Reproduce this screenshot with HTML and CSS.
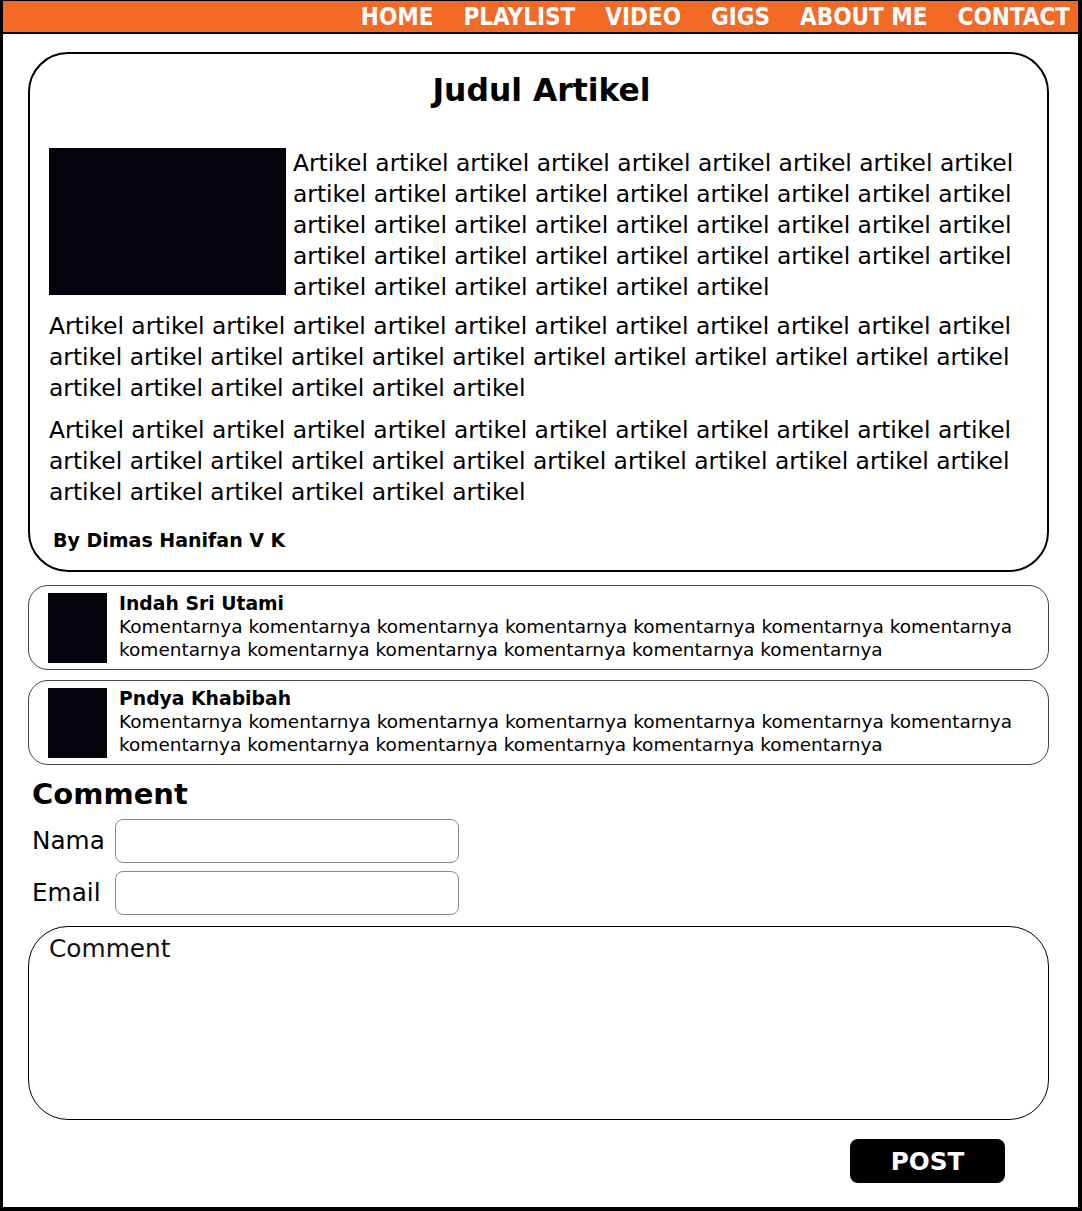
FILE: index.html
```html
<!DOCTYPE html>
<html lang="id">
<head>
<meta charset="utf-8">
<title>Judul Artikel</title>
<link rel="stylesheet" href="styles.css">
</head>
<body>
<div class="frame">
  <nav class="nav">
    <a href="#">HOME</a>
    <a href="#">PLAYLIST</a>
    <a href="#">VIDEO</a>
    <a href="#">GIGS</a>
    <a href="#">ABOUT ME</a>
    <a href="#">CONTACT</a>
  </nav>
  <main class="main">
    <article class="card">
      <h1 class="title">Judul Artikel</h1>
      <div class="body">
        <div class="thumb"></div>
        <p class="p1">Artikel artikel artikel artikel artikel artikel artikel artikel artikel artikel artikel artikel artikel artikel artikel artikel artikel artikel artikel artikel artikel artikel artikel artikel artikel artikel artikel artikel artikel artikel artikel artikel artikel artikel artikel artikel artikel artikel artikel artikel artikel artikel</p>
        <p class="p2">Artikel artikel artikel artikel artikel artikel artikel artikel artikel artikel artikel artikel artikel artikel artikel artikel artikel artikel artikel artikel artikel artikel artikel artikel artikel artikel artikel artikel artikel artikel</p>
        <p class="p3">Artikel artikel artikel artikel artikel artikel artikel artikel artikel artikel artikel artikel artikel artikel artikel artikel artikel artikel artikel artikel artikel artikel artikel artikel artikel artikel artikel artikel artikel artikel</p>
      </div>
      <div class="byline">By Dimas Hanifan V K</div>
    </article>

    <div class="comment">
      <div class="avatar"></div>
      <div class="ctext">
        <div class="cname">Indah Sri Utami</div>
        <div class="cbody">Komentarnya komentarnya komentarnya komentarnya komentarnya komentarnya komentarnya komentarnya komentarnya komentarnya komentarnya komentarnya komentarnya</div>
      </div>
    </div>
    <div class="comment second">
      <div class="avatar"></div>
      <div class="ctext">
        <div class="cname">Pndya Khabibah</div>
        <div class="cbody">Komentarnya komentarnya komentarnya komentarnya komentarnya komentarnya komentarnya komentarnya komentarnya komentarnya komentarnya komentarnya komentarnya</div>
      </div>
    </div>

    <form class="form">
      <h2 class="ftitle">Comment</h2>
      <div class="row">
        <label class="lbl">Nama</label>
        <input class="field" type="text">
      </div>
      <div class="row row2">
        <label class="lbl">Email</label>
        <input class="field" type="text">
      </div>
      <textarea class="area" placeholder="Comment"></textarea>
      <div class="actions">
        <button class="post" type="button">POST</button>
      </div>
    </form>
  </main>
</div>
</body>
</html>
```

FILE: styles.css
```css
* { box-sizing: border-box; }
html, body { margin: 0; padding: 0; background: #fff; }
body { font-family: "DejaVu Sans", "Liberation Sans", sans-serif; color: #000; }

.frame {
  width: 1082px;
  height: 1211px;
  border: 3px solid #000;
  border-top-width: 1px;
  border-right-width: 4px;
  border-bottom-width: 4px;
  overflow: hidden;
}

.nav {
  height: 33px;
  background: #f26a25;
  border-bottom: 2px solid #000;
  display: flex;
  justify-content: flex-end;
  align-items: center;
  gap: 30px;
  padding-right: 8px;
}
.nav a {
  color: #fff;
  text-decoration: none;
  font-family: "DejaVu Sans Condensed", "DejaVu Sans", sans-serif;
  font-stretch: condensed;
  font-weight: bold;
  font-size: 24px;
  line-height: 28px;
}

.main {
  padding: 18px 29px 0 25px;
}

.card {
  border: 2px solid #000;
  border-radius: 40px;
  padding: 18px 20px 19px 19px;
}
.title {
  margin: 0;
  padding-left: 7px;
  text-align: center;
  font-size: 31.4px;
  line-height: 36px;
  font-weight: bold;
}
.body {
  margin-top: 40px;
  font-size: 23.4px;
  line-height: 31px;
}
.body p { margin: 0; }
.thumb {
  float: left;
  width: 237px;
  height: 147px;
  margin: 0 7px 0 0;
  background: #03030b;
}
.p2 { clear: left; margin-top: 8px !important; }
.p3 { margin-top: 11px !important; }
.byline {
  margin-top: 21px;
  padding-left: 4px;
  font-weight: bold;
  font-size: 19px;
  line-height: 22px;
}

.comment {
  margin-top: 13px;
  height: 85px;
  border: 1px solid #444;
  border-radius: 20px;
  padding: 6px 20px 0 19px;
  display: flex;
  align-items: flex-start;
  gap: 12px;
}
.comment.second { margin-top: 10px; }
.avatar {
  flex: none;
  width: 59px;
  height: 70px;
  margin-top: 1px;
  background: #03030b;
}
.ctext {
  font-size: 18.5px;
  line-height: 23px;
}
.cname { font-weight: bold; font-size: 18.8px; }

.form { margin: 0; }
.ftitle {
  margin: 12px 0 0 4px;
  font-size: 29px;
  line-height: 34px;
  font-weight: bold;
}
.row {
  margin-top: 8px;
  display: flex;
  align-items: center;
  padding-left: 4px;
}
.row2 { margin-top: 8px; }
.lbl {
  width: 83px;
  font-size: 24.7px;
  line-height: 28px;
}
.field {
  width: 344px;
  height: 44px;
  border: 1px solid #8a8a8a;
  border-radius: 8px;
  background: #fff;
  outline: none;
  font-family: inherit;
  font-size: 18px;
  padding: 0 10px;
}
.area {
  display: block;
  margin-top: 11px;
  width: 100%;
  height: 194px;
  border: 1px solid #000;
  border-radius: 40px;
  padding: 8px 20px;
  resize: none;
  outline: none;
  font-family: "DejaVu Sans", sans-serif;
  font-size: 24.8px;
  line-height: 28px;
  color: #000;
}
.area::placeholder { color: #111; opacity: 1; }
.actions {
  display: flex;
  justify-content: flex-end;
  padding-right: 44px;
  margin-top: 19px;
}
.post {
  width: 155px;
  height: 44px;
  border: none;
  border-radius: 8px;
  background: #000;
  color: #fff;
  font-family: "DejaVu Sans", sans-serif;
  font-weight: bold;
  font-size: 24.7px;
  padding: 0;
  cursor: pointer;
}
```
